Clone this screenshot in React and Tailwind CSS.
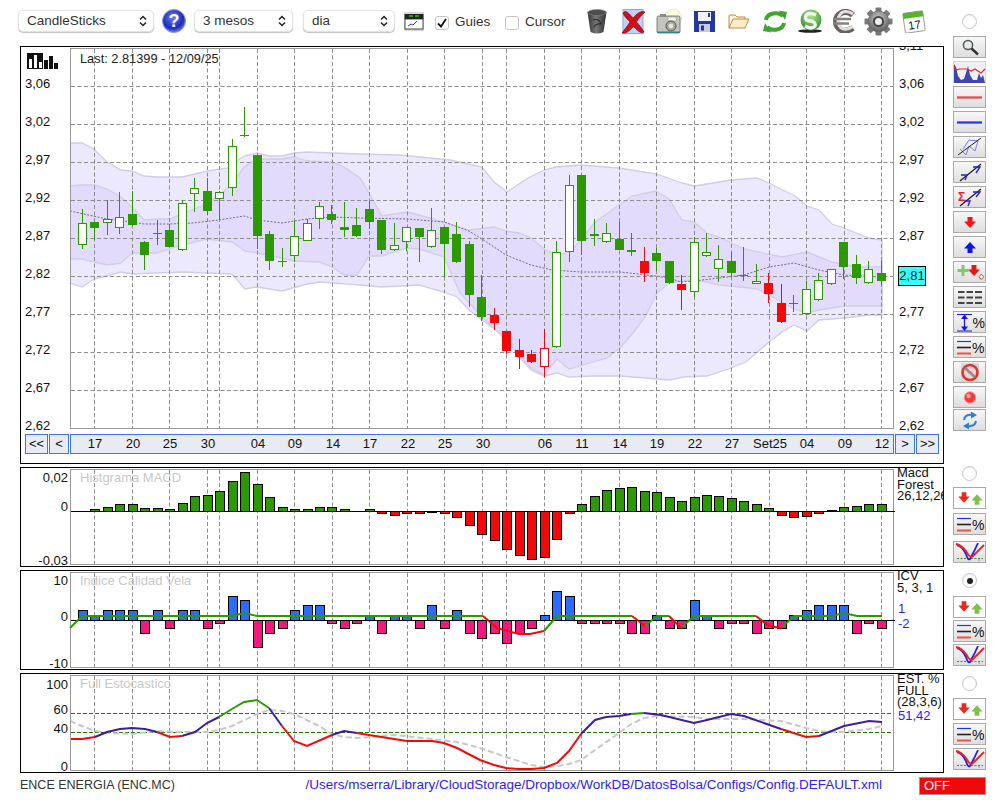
import React from 'react';

const GREEN = '#2a9a00';
const RED = '#f20a0a';
const PINK = '#f0197d';
const BLUE = '#2b6cff';

const gridX = [94, 132, 169, 207, 219, 257, 294, 332, 369, 407, 444, 482, 506, 544, 581, 619, 656, 694, 731, 769, 806, 844, 881];
const navTicks = [[94, '17'], [132, '20'], [169, '25'], [207, '30'], [257, '04'], [294, '09'], [332, '14'], [369, '17'], [407, '22'], [444, '25'], [482, '30'], [544, '06'], [581, '11'], [619, '14'], [656, '19'], [694, '22'], [731, '27'], [769, 'Set25'], [806, '04'], [844, '09'], [881, '12']];
const priceLabels = ['3,06', '3,02', '2,97', '2,92', '2,87', '2,82', '2,77', '2,72', '2,67', '2,62'];
const rightPrices = ['3,11', '3,06', '3,02', '2,97', '2,92', '2,87', '', '2,77', '2,72', '2,67', '2,62'];

const candleX = (i) => Math.floor(82.3 + 12.484 * i) + 0.5;

// tipo, mecha arriba, mecha abajo, cuerpo arriba, cuerpo abajo
const candles = [
    ['w', 209, 249, 223, 244], ['g', 222, 240, 222, 228], ['w', 200, 235, 219, 222], ['w', 192, 234, 217, 227],
    ['g', 191, 226, 214, 225], ['g', 241, 270, 242, 255], ['x', 220, 245, 233, 233], ['g', 224, 247, 230, 247],
    ['w', 200, 251, 203, 249], ['w', 178, 212, 188, 193], ['g', 178, 215, 191, 211], ['w', 191, 220, 192, 198],
    ['w', 139, 196, 146, 187], ['x', 107, 137, 135, 135], ['g', 155, 249, 155, 236], ['g', 231, 270, 234, 261],
    ['x', 248, 267, 261, 261], ['w', 221, 262, 236, 255], ['w', 219, 241, 223, 240], ['w', 202, 229, 206, 218],
    ['g', 205, 224, 214, 220], ['g', 202, 237, 227, 230], ['g', 208, 237, 225, 236], ['g', 201, 229, 209, 222],
    ['g', 220, 254, 220, 250], ['w', 223, 251, 245, 249], ['w', 227, 251, 227, 241], ['g', 228, 262, 228, 237],
    ['w', 208, 248, 230, 246], ['g', 227, 277, 227, 244], ['g', 222, 263, 234, 262], ['g', 241, 307, 244, 295],
    ['g', 275, 321, 297, 317], ['r', 308, 330, 315, 323], ['r', 331, 354, 331, 351], ['r', 339, 369, 350, 357],
    ['r', 350, 363, 354, 362], ['rw', 329, 377, 348, 366], ['w', 241, 348, 252, 346], ['w', 175, 262, 185, 251],
    ['g', 175, 255, 175, 241], ['g', 219, 246, 234, 236], ['w', 223, 243, 233, 241], ['g', 222, 250, 239, 250],
    ['g', 233, 256, 250, 252], ['r', 247, 282, 261, 273], ['g', 248, 271, 253, 261], ['g', 261, 284, 261, 283],
    ['r', 275, 310, 284, 290], ['w', 237, 297, 242, 291], ['w', 233, 257, 252, 255], ['w', 245, 282, 259, 268],
    ['g', 252, 277, 261, 273], ['x', 247, 281, 275, 275], ['w', 264, 284, 281, 283], ['r', 273, 303, 283, 294],
    ['r', 284, 323, 303, 322], ['x', 295, 312, 303, 303], ['w', 281, 315, 289, 313], ['w', 273, 301, 280, 299],
    ['w', 269, 285, 269, 283], ['g', 242, 279, 242, 267], ['g', 255, 284, 264, 278], ['w', 261, 284, 269, 282],
    ['g', 261, 285, 273, 281],
];

const outerTop = [[70, 143], [82, 143], [94, 149], [107, 162], [121, 170], [132, 171], [144, 176], [157, 177], [182, 177], [207, 171], [228, 168], [238, 160], [244, 156], [257, 153], [269, 156], [282, 156], [294, 153], [307, 152], [332, 153], [360, 154], [400, 155], [450, 160], [482, 167], [494, 182], [507, 192], [528, 178], [544, 170], [556, 167], [581, 165], [619, 168], [656, 174], [682, 183], [694, 186], [707, 184], [731, 180], [757, 178], [769, 183], [795, 196], [807, 206], [819, 210], [832, 224], [844, 228], [869, 238], [882, 240]];
const outerBottom = [[70, 283], [82, 287], [94, 279], [121, 272], [132, 274], [182, 272], [207, 273], [232, 274], [245, 289], [257, 287], [282, 291], [307, 284], [320, 282], [360, 285], [381, 287], [419, 285], [444, 292], [457, 297], [469, 310], [482, 320], [506, 337], [519, 357], [531, 370], [544, 376], [557, 373], [569, 377], [593, 376], [620, 376], [645, 378], [670, 380], [683, 377], [707, 376], [731, 368], [746, 362], [769, 342], [782, 332], [794, 325], [807, 331], [819, 320], [844, 318], [869, 315], [882, 315]];
const innerTop = [[70, 186], [82, 185], [94, 185], [107, 189], [121, 197], [132, 207], [144, 220], [157, 219], [169, 219], [182, 214], [207, 204], [232, 185], [244, 167], [257, 159], [282, 159], [294, 157], [307, 161], [332, 162], [344, 167], [360, 178], [369, 193], [382, 216], [407, 212], [419, 215], [444, 222], [469, 230], [494, 227], [506, 231], [519, 233], [531, 238], [544, 249], [556, 255], [569, 253], [581, 240], [594, 223], [619, 205], [632, 196], [656, 191], [669, 199], [682, 220], [694, 222], [707, 233], [719, 237], [744, 249], [782, 257], [807, 252], [832, 262], [857, 267], [882, 267]];
const innerBottom = [[70, 259], [82, 259], [107, 265], [121, 263], [132, 253], [157, 253], [182, 245], [207, 239], [232, 242], [245, 251], [269, 255], [294, 261], [319, 262], [332, 267], [344, 275], [357, 275], [369, 256], [382, 256], [407, 248], [419, 249], [444, 257], [460, 293], [482, 317], [506, 340], [531, 368], [544, 375], [557, 359], [569, 369], [607, 358], [620, 348], [633, 333], [645, 317], [657, 293], [669, 283], [690, 280], [707, 282], [720, 285], [731, 286], [757, 289], [769, 295], [794, 309], [807, 313], [819, 310], [844, 306], [882, 306]];
const midLine = [[70, 211], [93, 216], [107, 219], [132, 222], [144, 224], [169, 224], [193, 223], [219, 220], [244, 216], [257, 220], [282, 223], [307, 219], [332, 217], [360, 218], [407, 219], [444, 222], [469, 231], [482, 239], [506, 255], [531, 265], [552, 270], [581, 272], [620, 272], [656, 276], [669, 278], [681, 282], [694, 281], [719, 278], [744, 275], [769, 267], [794, 263], [819, 270], [844, 275], [881, 277]];

const macd = [0, 1.3, 4, 7, 7, 3, 3, 2, 8, 15, 16, 20, 30, 39, 27, 14, 4, 1.3, 1.3, 4, 4, 2, 0, 1.3, -2, -4, -2, -2, -1, -2, -6, -14, -23, -29, -38, -44, -48, -46, -28, -2, 7, 15, 21, 23, 24, 20, 19, 14, 10, 14, 16, 15, 13, 10, 7, 3, -4, -6, -5, -2, 1, 4, 5, 7, 7];
const icv = [10, 5, 10, 10, 10, -13, 10, -8, 10, 10, -8, -3, 24, 20, -27, -13, -8, 10, 15, 15, -3, -8, -3, 4, -13, 4, 4, -8, 15, -8, 10, -13, -18, -13, -23, -13, -8, 5, 29, 24, -3, -3, -3, -3, -13, -13, 5, -8, -8, 20, 5, -8, -3, -3, -13, -8, -8, 5, 10, 15, 15, 15, -13, -3, -8];

// trazos leidos en pagina: [color, puntos]
const icvLine = [
    [GREEN, [[70, 628], [82, 616], [232, 616], [244, 613], [257, 616], [483, 616]]],
    [RED, [[483, 616], [497, 628], [519, 634], [530, 634], [544, 631]]],
    [GREEN, [[544, 631], [557, 616], [632, 616]]],
    [RED, [[632, 616], [645, 626]]],
    [GREEN, [[645, 626], [657, 616], [669, 616]]],
    [RED, [[669, 616], [681, 628]]],
    [GREEN, [[681, 628], [694, 616], [756, 616]]],
    [RED, [[756, 616], [769, 626], [781, 628]]],
    [GREEN, [[781, 628], [794, 616], [831, 616], [844, 613], [857, 616], [882, 616]]],
];

const PURPLE = '#3b1f9a';
const stoK = [
    [RED, [[70, 739], [82, 739], [95, 737]]],
    [PURPLE, [[95, 737], [107, 732], [120, 729], [132, 728], [145, 729], [157, 732]]],
    [RED, [[157, 732], [170, 737], [182, 736]]],
    [PURPLE, [[182, 736], [195, 732], [207, 723], [219, 717]]],
    [GREEN, [[219, 717], [232, 709], [244, 702], [257, 700], [269, 708]]],
    [PURPLE, [[269, 708], [282, 726]]],
    [RED, [[282, 726], [294, 741], [307, 746], [332, 735]]],
    [PURPLE, [[332, 735], [344, 731], [357, 733]]],
    [RED, [[357, 733], [369, 735], [394, 739], [407, 741], [432, 741], [444, 743], [457, 748], [480, 760], [494, 765], [506, 768], [519, 769], [531, 769], [544, 768], [557, 763], [569, 751], [581, 734]]],
    [PURPLE, [[581, 734], [595, 720], [606, 717], [619, 716], [631, 714]]],
    [GREEN, [[631, 714], [644, 713]]],
    [PURPLE, [[644, 713], [661, 715], [694, 723], [707, 720], [731, 714], [744, 716], [781, 729]]],
    [RED, [[781, 729], [806, 737], [819, 736]]],
    [PURPLE, [[819, 736], [844, 726], [869, 721], [882, 722]]],
];
const stoD = [[70, 721], [82, 726], [95, 731], [107, 733], [132, 734], [157, 731], [182, 732], [207, 732], [219, 730], [232, 726], [257, 714], [269, 710], [282, 711], [294, 714], [319, 726], [332, 734], [344, 737], [357, 738], [369, 737], [394, 735], [432, 739], [457, 742], [480, 748], [506, 757], [531, 765], [544, 767], [557, 766], [569, 764], [581, 760], [595, 750], [619, 733], [631, 724], [644, 718], [656, 716], [694, 717], [707, 719], [744, 719], [781, 721], [806, 728], [819, 731], [830, 732], [844, 732], [869, 729], [882, 726]];

const pts = (a) => a.map((p) => p.join(',')).join(' ');

function VGrid({ y1, y2 }) {
    return gridX.map((x) => (
        <line key={x} x1={x + 0.5} x2={x + 0.5} y1={y1} y2={y2} stroke="#8c8c8c" strokeDasharray="4 2.5" />
    ));
}

function PriceChart() {
    return (
        <svg viewBox="71 49 822 379" className="block w-[822px] h-[379px]">
            <polygon points={pts([...outerTop, ...[...outerBottom].reverse()])} fill="#ece8fd" stroke="#d2cce8" strokeWidth="1.3" />
            <polygon points={pts([...innerTop, ...[...innerBottom].reverse()])} fill="#e3dbfc" stroke="#d2cce8" strokeWidth="1.3" />
            <polyline points={pts(midLine)} fill="none" stroke="#75688f" strokeDasharray="2 1.5" />
            {[86, 124, 162, 200, 238, 276, 314, 352, 390].map((y) => (
                <line key={y} x1="71" x2="893" y1={y + 0.5} y2={y + 0.5} stroke="#8c8c8c" strokeDasharray="4 2.5" />
            ))}
            <VGrid y1={49} y2={428} />
            {candles.map(([t, wt, wb, bt, bb], i) => {
                const x = candleX(i);
                const col = t === 'r' || t === 'rw' ? RED : GREEN;
                return (
                    <g key={i} shapeRendering="crispEdges">
                        <line x1={x} x2={x} y1={wt} y2={wb} stroke={col} />
                        {t === 'x' && <rect x={x - 4.5} y={bt} width="9" height="1" fill={col} />}
                        {(t === 'g' || t === 'r') && <rect x={x - 4.5} y={bt} width="9" height={bb - bt} fill={col} />}
                        {(t === 'w' || t === 'rw') && <rect x={x - 4} y={bt + 0.5} width="8" height={bb - bt} fill="#fff" stroke={col} />}
                    </g>
                );
            })}
        </svg>
    );
}

function BarsChart({ values, zero, top, scale, color }) {
    return (
        <svg viewBox={`71 ${top} 822 94`} className="block w-[822px] h-[94px] overflow-visible">
            <VGrid y1={top} y2={top + 94} />
            {values.map((v, i) => {
                if (v === 0) return null;
                const h = Math.abs(v) * scale;
                const x = candleX(i);
                return (
                    <rect key={i} x={x - 4} y={v > 0 ? zero - h : zero} width="9" height={h} fill={color(v)} stroke="#000" shapeRendering="crispEdges" />
                );
            })}
            <line x1="71" x2="895" y1={zero + 0.5} y2={zero + 0.5} stroke="#000" />
            {values === icv && icvLine.map(([c, p], i) => (
                <polyline key={i} points={pts(p)} fill="none" stroke={c} strokeWidth="2" />
            ))}
        </svg>
    );
}

function StochChart() {
    return (
        <svg viewBox="71 676 822 94" className="block w-[822px] h-[94px]">
            <VGrid y1={676} y2={770} />
            <line x1="71" x2="893" y1="713.5" y2="713.5" stroke="#e01010" strokeDasharray="4 2" />
            <line x1="71" x2="893" y1="732.5" y2="732.5" stroke="#1a7a00" strokeDasharray="4 2" />
            <polyline points={pts(stoD)} fill="none" stroke="#c8c8c8" strokeWidth="2" strokeDasharray="6 3" />
            {stoK.map(([c, p], i) => (
                <polyline key={i} points={pts(p)} fill="none" stroke={c} strokeWidth="2" />
            ))}
        </svg>
    );
}

function Select({ label, width, className = '' }) {
    return (
        <div className={`${width} ${className} h-[22px] flex items-center justify-between pl-[8px] pr-[6px] bg-white rounded-[5px] border border-[#e2e2e2] shadow-[0_1px_1px_rgba(0,0,0,0.25)] text-[13.5px] text-[#333]`}>
            <span>{label}</span>
            <svg viewBox="0 0 8 12" className="w-[8px] h-[12px]" fill="none" stroke="#222" strokeWidth="1.5">
                <path d="M1 4.5 L4 1.5 L7 4.5 M1 7.5 L4 10.5 L7 7.5" />
            </svg>
        </div>
    );
}

function Checkbox({ checked, className = '' }) {
    return (
        <div className={`${className} w-[14px] h-[14px] mt-[3px] bg-white rounded-[3px] border border-[#c4c4c4] flex items-center justify-center`}>
            {checked && (
                <svg viewBox="0 0 12 12" className="w-[12px] h-[12px]" fill="none" stroke="#111" strokeWidth="1.8">
                    <path d="M2 6.5 L5 9.5 L10 2" />
                </svg>
            )}
        </div>
    );
}

function Radio({ on, className = '' }) {
    return (
        <div className={`${className} w-[15px] h-[15px] ml-[9px] rounded-full bg-white border border-[#c6c6c6] flex items-center justify-center shadow-[inset_0_1px_1px_rgba(0,0,0,0.08)]`}>
            {on && <div className="w-[6px] h-[6px] rounded-full bg-[#222]" />}
        </div>
    );
}

/* iconos de la barra superior */
const HelpIcon = () => (
    <svg viewBox="0 0 24 24" className="w-[24px] h-[24px] ml-[8px]">
        <defs>
            <radialGradient id="hlp" cx="45%" cy="35%" r="65%">
                <stop offset="0%" stopColor="#6f7ff0" />
                <stop offset="70%" stopColor="#1c2bb8" />
                <stop offset="100%" stopColor="#6a78e8" />
            </radialGradient>
        </defs>
        <circle cx="12" cy="12" r="11.5" fill="url(#hlp)" stroke="#8f9ae0" />
        <text x="12" y="18" textAnchor="middle" fontSize="18" fontWeight="700" fill="#fff">?</text>
    </svg>
);

const WindowIcon = () => (
    <svg viewBox="0 0 20 19" className="w-[20px] h-[19px] ml-[9px]">
        <rect width="20" height="19" fill="#d8d8d8" />
        <rect x="0.5" y="2" width="19" height="5" fill="#222" />
        <path d="M5 4h4M11 4h4" stroke="#2fbf2f" strokeWidth="1.5" />
        <rect x="1" y="7" width="18" height="10" fill="#fff" stroke="#222" strokeWidth="0.8" />
        <polyline points="4,14 7,12 9,13 13,9" fill="none" stroke="#2244dd" />
    </svg>
);

const TrashIcon = () => (
    <svg viewBox="0 0 20 25" className="w-[20px] h-[25px] ml-[22px]">
        <defs>
            <linearGradient id="trs" x1="0" x2="1">
                <stop offset="0%" stopColor="#333" />
                <stop offset="45%" stopColor="#777" />
                <stop offset="100%" stopColor="#2e2e2e" />
            </linearGradient>
        </defs>
        <path d="M0.5 3 L3.5 23 Q10 26 16.5 23 L19.5 3 Z" fill="url(#trs)" />
        <ellipse cx="10" cy="3.5" rx="9.5" ry="3" fill="#4d4d4d" stroke="#8a8a8a" strokeWidth="0.6" />
        <path d="M6 11 Q12 9 14 15 Q9 14 7 18" fill="none" stroke="#2e2e2e" strokeWidth="1.2" />
    </svg>
);

const XIcon = () => (
    <svg viewBox="0 0 26 25" className="w-[26px] h-[25px] ml-[13px]">
        <rect x="3" y="0.5" width="20" height="24" fill="#bcd2f8" stroke="#86a6ea" />
        <path d="M4 3 C7 1 10 6 13 9 C16 6 20 1 25 3 C21 7 18 10 16.5 13 C19 16 22 19 24 23 C21 25 18 22 13.5 17.5 C10 21 7 25 2 24 C5 20 8 16 10 13 C7 10 4 7 3 4 Z" fill="#d01018" stroke="#8a0a0e" strokeWidth="0.7" />
    </svg>
);

const CameraIcon = () => (
    <svg viewBox="0 0 27 25" className="w-[27px] h-[25px] ml-[10px]">
        <circle cx="17" cy="9" r="8.5" fill="#fcfce2" stroke="#ecebb5" />
        <rect x="1" y="7" width="23" height="17" rx="1.5" fill="#c4c4be" stroke="#666" strokeWidth="0.8" />
        <rect x="4" y="5" width="6" height="3" fill="#8b8b8b" />
        <rect x="12" y="8" width="8" height="4" fill="#f4f4e4" stroke="#888" strokeWidth="0.5" />
        <circle cx="15" cy="17" r="5" fill="#a6a69c" stroke="#555" />
        <circle cx="15" cy="17" r="2.4" fill="#e6e6d8" />
        <rect x="1" y="22.5" width="23" height="1.5" fill="#3d7f88" />
    </svg>
);

const FloppyIcon = () => (
    <svg viewBox="0 0 21 21" className="w-[21px] h-[21px] ml-[11px]">
        <rect width="21" height="21" fill="#2336a8" />
        <rect x="4" y="1" width="13" height="9" fill="#eef2ff" />
        <rect x="14" y="2" width="2" height="4" fill="#2336a8" />
        <rect x="5" y="13" width="11" height="8" fill="#c8ccd8" />
        <rect x="7" y="14.5" width="3" height="5" fill="#2336a8" />
    </svg>
);

const FolderIcon = () => (
    <svg viewBox="0 0 22 15" className="w-[22px] h-[15px] ml-[13px]" fill="#fbeccb" stroke="#c08a45">
        <path d="M1 14 V2 Q1 1 2 1 H7 L9 3 H17 V5" fill="#fff4dc" />
        <path d="M1 14 L5 5 H21 L17 14 Z" />
    </svg>
);

const RefreshIcon = () => (
    <svg viewBox="0 0 24 23" className="w-[24px] h-[23px] ml-[13px]" fill="none" stroke="#3fa52f" strokeWidth="4">
        <path d="M3 10 C4 3 15 1 20 6" />
        <path d="M16 0.5 L24 2 L22 10 Z" fill="#3fa52f" stroke="none" />
        <path d="M21 13 C20 20 9 22 4 17" />
        <path d="M8 22.5 L0 21 L2 13 Z" fill="#3fa52f" stroke="none" />
    </svg>
);

const MoneyIcon = () => (
    <svg viewBox="0 0 26 24" className="w-[26px] h-[24px] ml-[10px]">
        <defs>
            <radialGradient id="mny" cx="50%" cy="30%" r="70%">
                <stop offset="0%" stopColor="#b6e28c" />
                <stop offset="100%" stopColor="#2f8f2f" />
            </radialGradient>
        </defs>
        <ellipse cx="13" cy="22" rx="12" ry="1.8" fill="#222" />
        <circle cx="14" cy="11" r="10.5" fill="url(#mny)" />
        <path d="M19 6 Q10 2 8.5 8 Q8 12 14 12 Q19 13 18 17 Q15 21 8 17" fill="none" stroke="#f1f1f1" strokeWidth="3.5" />
    </svg>
);

const EuroIcon = () => (
    <svg viewBox="0 0 24 24" className="w-[24px] h-[24px] ml-[9px]" fill="none">
        <path d="M21 6 Q15 1 9 4 Q4 7 4 12 Q4 18 9 21 Q15 23 21 19" stroke="#6b6060" strokeWidth="6" />
        <path d="M21 5 Q15 1 10 3.5 Q6 7 6 12 Q6 17 10 19.5 Q15 21.5 21 17.5" stroke="#e2dede" strokeWidth="3" />
        <path d="M1 10 H19 M1 14.5 H17" stroke="#8a7f7f" strokeWidth="2.6" />
    </svg>
);

const GearIcon = () => (
    <svg viewBox="0 0 29 29" className="w-[29px] h-[29px] ml-[8px]">
        <defs>
            <radialGradient id="ger" cx="50%" cy="35%" r="65%">
                <stop offset="0%" stopColor="#c9c9c9" />
                <stop offset="100%" stopColor="#5f5f5f" />
            </radialGradient>
        </defs>
        {[0, 45, 90, 135, 180, 225, 270, 315].map((a) => (
            <rect key={a} x="11.5" y="0.5" width="6" height="7" rx="1" fill="#7a7a7a" transform={`rotate(${a} 14.5 14.5)`} />
        ))}
        <circle cx="14.5" cy="14.5" r="10.5" fill="url(#ger)" stroke="#666" strokeWidth="0.6" />
        <circle cx="14.5" cy="14.5" r="4.5" fill="#eee" stroke="#444" strokeWidth="2" />
    </svg>
);

const CalendarIcon = () => (
    <svg viewBox="0 0 24 23" className="w-[24px] h-[23px] ml-[9px]">
        <g transform="rotate(-8 12 12)">
            <rect x="2" y="2" width="20" height="20" rx="1.5" fill="#fff" stroke="#777" strokeWidth="0.7" />
            <rect x="2" y="2" width="20" height="5.5" fill="#55b52f" />
            <text x="12" y="19" textAnchor="middle" fontSize="11.5" fill="#222">17</text>
        </g>
    </svg>
);

/* iconos de la columna derecha */
const Arrow = ({ x, y, color, up, s = 1 }) => (
    <path
        transform={`translate(${x} ${y}) scale(${s} ${up ? -s : s})`}
        d="M-2.5 -6 H2.5 V-1.5 H6 L0 5 L-6 -1.5 H-2.5 Z"
        fill={color}
    />
);

const VCurve = () => (
    <g fill="none">
        <line x1="2" x2="28" y1="15.5" y2="15.5" stroke="#1a7a00" strokeWidth="0.8" strokeDasharray="2 1.5" />
        <line x1="24" x2="24" y1="16" y2="18" stroke="#888" strokeWidth="0.7" />
        <path d="M2 2 Q7 3 11 11 Q13 18 15 16 Q19 9 23 0" stroke="#2222ee" strokeWidth="1.8" />
        <path d="M1 1 Q6 2 11 8 Q15 16 18 13 Q23 8 29 2" stroke="#ee2222" strokeWidth="1.8" />
    </g>
);

const Pct = ({ x = 18, size = 14 }) => (
    <text x={x} y="15" fontSize={size} fill="#111">%</text>
);

const LinesPct = () => (
    <g>
        <line x1="2" x2="16" y1="3.5" y2="3.5" stroke="#2233ee" strokeWidth="1.2" />
        <line x1="2" x2="16" y1="9.5" y2="9.5" stroke="#222" strokeWidth="1.6" />
        <line x1="2" x2="16" y1="15.5" y2="15.5" stroke="#ee5544" strokeWidth="2" />
        <Pct x={17} />
    </g>
);

const icons = {
    mag: (
        <g>
            <circle cx="13" cy="7" r="4.6" fill="#e6ecee" stroke="#555" strokeWidth="1.5" />
            <line x1="16.5" y1="10.5" x2="23" y2="16.5" stroke="#333" strokeWidth="2.4" />
        </g>
    ),
    red: <line x1="2" x2="27" y1="9.5" y2="9.5" stroke="#e9444c" strokeWidth="2.2" />,
    blue: <line x1="2" x2="27" y1="9.5" y2="9.5" stroke="#2233ee" strokeWidth="2.2" />,
    channel: (
        <g fill="none">
            <path d="M5 11 L11 17 L14 8 L20 13 L23 3 L14 2 L8 11" stroke="#7a7af0" strokeWidth="1" />
            <line x1="3" y1="17" x2="26" y2="0" stroke="#222" strokeWidth="1" />
        </g>
    ),
    trend: (
        <g>
            <line x1="5" y1="18" x2="26" y2="1" stroke="#222" strokeWidth="1.3" />
            <path d="M6 12 L12 12 L10 17 M18 4 L25 4 L21 10" fill="none" stroke="#2222c8" strokeWidth="1.4" />
        </g>
    ),
    sigma: (
        <g>
            <line x1="5" y1="18" x2="26" y2="1" stroke="#222" strokeWidth="1.3" />
            <path d="M9 13 L15 13 L13 18 M18 4 L25 4 L21 9" fill="none" stroke="#2222c8" strokeWidth="1.4" />
            <text x="3" y="13" fontSize="12" fontWeight="700" fill="#e8213a">Σ</text>
        </g>
    ),
    down: <Arrow x={15} y={10} color="#f51515" />,
    up: <Arrow x={15} y={9} color="#1414e8" up />,
    plus: (
        <g>
            <path d="M8 2 V13 M2.5 7.5 H13.5" stroke="#7fc96a" strokeWidth="3" />
            <Arrow x={19} y={8} color="#ee1414" />
            <rect x="24.5" y="12" width="3.6" height="3.6" fill="#fff" stroke="#ee1414" strokeWidth="0.8" transform="rotate(45 26.3 13.8)" />
        </g>
    ),
    dashes: (
        <g stroke="#444" strokeWidth="2">
            {[4, 9.5, 15].map((y) => (
                <path key={y} d={`M3 ${y} H9.5 M11.5 ${y} H18 M20 ${y} H27`} />
            ))}
        </g>
    ),
    height: (
        <g>
            <path d="M2 1.5 H17 M2 18 H17 M9.5 3 V16" stroke="#1414e8" strokeWidth="1.2" />
            <path d="M6 6 L9.5 1.5 L13 6 Z M6 13.5 L9.5 18 L13 13.5 Z" fill="#1414e8" />
            <Pct x={17.5} />
        </g>
    ),
    lines: <LinesPct />,
    stop: (
        <g>
            <rect x="6" y="0" width="18" height="19" fill="#d8d6d6" />
            <circle cx="15" cy="9.5" r="7.5" fill="#f0d0d0" stroke="#d43a30" strokeWidth="2.6" />
            <line x1="10" y1="5" x2="20" y2="14" stroke="#9a8a8a" strokeWidth="2.6" />
        </g>
    ),
    rec: (
        <g>
            <circle cx="15" cy="9.5" r="5.8" fill="#f53a3a" stroke="#f7a0a0" />
            <circle cx="13.5" cy="8" r="2.2" fill="#ff9c9c" />
        </g>
    ),
    sync: (
        <g fill="none" stroke="#2d7fd8" strokeWidth="2">
            <path d="M9 9 Q10 3 18 4" />
            <path d="M16 0.5 L22 4 L16 7.5 Z" fill="#2d7fd8" stroke="none" />
            <path d="M21 10 Q20 16 12 15" />
            <path d="M14 11.5 L8 15 L14 18.5 Z" fill="#2d7fd8" stroke="none" />
        </g>
    ),
    arrows: (
        <g>
            <Arrow x={9} y={9} color="#e82a1c" s={0.95} />
            <Arrow x={22} y={10} color="#7fc04a" up s={0.95} />
        </g>
    ),
    v: <VCurve />,
};

function Btn({ icon, white, className = '' }) {
    return (
        <div className={`${className} w-[33px] h-[22px] flex items-center justify-center border-[1.5px] border-[#aaa] ${white ? 'bg-white' : 'bg-linear-to-b from-[#f7f7f7] to-[#dedede]'}`}>
            <svg viewBox="0 0 30 19" className="w-[30px] h-[19px]">{icons[icon]}</svg>
        </div>
    );
}

const WaveBtn = () => (
    <svg viewBox="0 0 33 22" className="w-[33px] h-[22px] block">
        <rect width="33" height="22" fill="#f0f0f4" stroke="#bbb" />
        <path d="M1 22 V3 L3 6 L5 15 L8 19 L11 18 L13 12 L15 5 L17 14 L20 19 L24 19 L26 12 L28 17 L30 14 L32 22 Z" fill="#3f45ad" />
        <polyline points="1,5 3,9 7,8 14,8 18,10 22,8 25,10 28,12 32,8" fill="none" stroke="#e8262a" strokeWidth="1.2" />
    </svg>
);

function Tick({ y, children }) {
    return (
        <span className="absolute right-[2px] w-full text-right text-[13px] leading-[14px] text-[#111]" style={{ top: y - 7 }}>
            {children}
        </span>
    );
}

function SubPanel({ title, ticks, side, children }) {
    return (
        <div className="relative w-[924px] h-[100px] border border-black flex overflow-hidden">
            <div className="relative w-[49px] shrink-0">
                {ticks.map(([y, t]) => <Tick key={t} y={y}>{t}</Tick>)}
            </div>
            <div className="relative mt-[1px] w-[824px] h-[96px] border border-[#999]">
                {children}
                <span className="absolute left-[9px] top-[1px] text-[13px] leading-[14px] text-[#c8c8c8]">{title}</span>
            </div>
            <div className="pl-[3px] -mt-[1px] text-[13px] leading-[11.5px] text-[#111] whitespace-nowrap">{side}</div>
        </div>
    );
}

const NavBtn = ({ children, className }) => (
    <div className={`${className} h-[20px] flex items-center justify-center border border-[#3b76f0] bg-[#e9ebf2] text-[13px] text-[#111]`}>{children}</div>
);

function MainPanel() {
    return (
        <div className="relative w-[924px] h-[418px] border border-black overflow-hidden">
            <div className="flex h-[382px]">
                <div className="w-[49px] shrink-0 text-[13px] text-[#111] pl-[4px]">
                    <svg viewBox="0 0 32 16" className="block w-[32px] h-[16px] ml-[2px] mt-[6px] -mb-[4px]">
                        <rect x="0" y="0" width="16" height="16" fill="#111" />
                        <rect x="2" y="6" width="3" height="9" fill="#fff" />
                        <rect x="7" y="2" width="3" height="13" fill="#fff" />
                        <rect x="12" y="9" width="3" height="6" fill="#fff" />
                        <rect x="17" y="7" width="4" height="9" fill="#111" />
                        <rect x="22" y="3" width="4" height="13" fill="#111" />
                        <rect x="27" y="10" width="4" height="6" fill="#111" />
                    </svg>
                    {priceLabels.map((p) => (
                        <div key={p} className="h-[38px] flex items-center">{p}</div>
                    ))}
                </div>
                <div className="relative mt-[1px] w-[824px] h-[381px] border border-[#999] shrink-0">
                    <PriceChart />
                    <span className="absolute left-[9px] top-[3px] text-[12.8px] leading-[14px] text-[#222]">Last: 2.81399 - 12/09/25</span>
                </div>
                <div className="-mt-[20px] pl-[5px] text-[13px] text-[#111]">
                    {rightPrices.map((p, i) => (
                        <div key={i} className="h-[38px] flex items-center">{p}</div>
                    ))}
                </div>
            </div>
            <div className="absolute left-[877px] top-[219px] w-[28px] h-[20px] flex items-center justify-center bg-[#33ffff] border border-black text-[13px] text-[#111]">2,81</div>
            <div className="flex pl-[4px] mt-[5px] gap-[1px]">
                <NavBtn className="w-[23px]">&lt;&lt;</NavBtn>
                <NavBtn className="w-[20px]">&lt;</NavBtn>
                <div className="relative w-[824px] h-[20px] border border-[#3b76f0] bg-[#e9ebf2] text-[13px] text-[#111]">
                    {navTicks.map(([x, t]) => (
                        <span key={x} className="absolute top-[1px] -translate-x-1/2 leading-[16px]" style={{ left: x - 70 }}>{t}</span>
                    ))}
                </div>
                <NavBtn className="w-[20px]">&gt;</NavBtn>
                <NavBtn className="w-[23px]">&gt;&gt;</NavBtn>
            </div>
        </div>
    );
}

export default function App() {
    return (
        <div className="relative w-[1000px] h-[800px] bg-white overflow-hidden font-['Liberation_Sans',Arial,sans-serif]">
            <div className="flex h-[773px]">
                <div className="w-[953px] shrink-0">
                    {/* Barra superior */}
                    <div className="flex items-center h-[46px] pl-[18px] pb-[4px]">
                        <Select label="CandleSticks" width="w-[136px]" />
                        <HelpIcon />
                        <Select label="3 mesos" width="w-[99px]" className="ml-[8px]" />
                        <Select label="dia" width="w-[92px]" className="ml-[10px]" />
                        <WindowIcon />
                        <Checkbox checked className="ml-[11px]" />
                        <span className="ml-[6px] mt-[3px] w-[50px] text-[13.5px] text-[#333]">Guies</span>
                        <Checkbox />
                        <span className="ml-[6px] mt-[3px] w-[40px] text-[13.5px] text-[#333]">Cursor</span>
                        <TrashIcon />
                        <XIcon />
                        <CameraIcon />
                        <FloppyIcon />
                        <FolderIcon />
                        <RefreshIcon />
                        <MoneyIcon />
                        <EuroIcon />
                        <GearIcon />
                        <CalendarIcon />
                    </div>
                    <div className="ml-[20px] flex flex-col gap-[3px]">
                        <MainPanel />
                        <SubPanel
                            title="Histgrama MACD"
                            ticks={[[10, '0,02'], [39, '0'], [93, '-0,03']]}
                            side={<><div>Macd</div><div>Forest</div><div>26,12,26</div></>}
                        >
                            <BarsChart values={macd} zero={511} top={470} scale={1} color={(v) => (v > 0 ? GREEN : RED)} />
                        </SubPanel>
                        <SubPanel
                            title="Indice Calidad Vela"
                            ticks={[[10, '10'], [46, '0'], [93, '-10']]}
                            side={
                                <>
                                    <div>ICV</div>
                                    <div>5, 3, 1</div>
                                    <div className="mt-[10px] pl-[1px] text-[#2a1cff]">1</div>
                                    <div className="mt-[3px] pl-[1px] text-[#2a1cff]">-2</div>
                                </>
                            }
                        >
                            <BarsChart values={icv} zero={620} top={573} scale={1} color={(v) => (v > 0 ? BLUE : PINK)} />
                        </SubPanel>
                        <SubPanel
                            title="Full Estocastico"
                            ticks={[[11, '100'], [36, '60'], [55, '40'], [93, '0']]}
                            side={
                                <>
                                    <div>EST. %</div>
                                    <div>FULL</div>
                                    <div>(28,3,6)</div>
                                    <div className="mt-[2px] pl-[1px] text-[#2a1cff]">51,42</div>
                                </>
                            }
                        >
                            <StochChart />
                        </SubPanel>
                    </div>
                </div>

                {/* Columna de botones */}
                <div className="w-[33px] flex flex-col">
                    <Radio className="mt-[14px]" />
                    <div className="mt-[7px] flex flex-col gap-[3px]">
                        <Btn icon="mag" />
                        <WaveBtn />
                        <Btn icon="red" />
                        <Btn icon="blue" />
                        <Btn icon="channel" />
                        <Btn icon="trend" />
                        <Btn icon="sigma" />
                        <Btn icon="down" />
                        <Btn icon="up" />
                        <Btn icon="plus" />
                        <Btn icon="dashes" />
                        <Btn icon="height" />
                        <Btn icon="lines" />
                        <Btn icon="stop" />
                        <Btn icon="rec" />
                        <Btn icon="sync" className="-mt-[2px]" />
                    </div>
                    <Radio className="mt-[35px]" />
                    <Btn icon="arrows" white className="mt-[6px]" />
                    <Btn icon="lines" className="mt-[4px]" />
                    <Btn icon="v" className="mt-[6px]" />
                    <Radio on className="mt-[10px]" />
                    <Btn icon="arrows" white className="mt-[8px]" />
                    <Btn icon="lines" className="mt-[2px]" />
                    <Btn icon="v" className="mt-[2px]" />
                    <Radio className="mt-[10px]" />
                    <Btn icon="arrows" white className="mt-[7px]" />
                    <Btn icon="lines" className="mt-[3px]" />
                    <Btn icon="v" className="mt-[3px]" />
                </div>
            </div>

            {/* Pie */}
            <div className="flex items-center h-[27px] pl-[20px] pb-[2px] whitespace-nowrap">
                <span className="text-[12.5px] text-[#333]">ENCE ENERGIA (ENC.MC)</span>
                <span className="ml-auto text-[13.5px] text-[#2a1cff]">/Users/mserra/Library/CloudStorage/Dropbox/WorkDB/DatosBolsa/Configs/Config.DEFAULT.xml</span>
                <div className="ml-[37px] mr-[14px] w-[67px] h-[18px] flex items-center pl-[4px] bg-[#ee0a0a] border-[1.5px] border-[#999] text-[13px] text-white">OFF</div>
            </div>
        </div>
    );
}
